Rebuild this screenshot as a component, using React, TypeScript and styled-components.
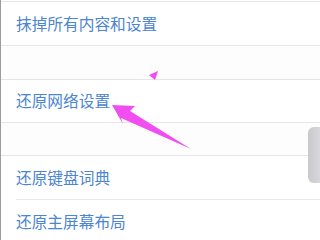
import React from "react";
import styled, { createGlobalStyle } from "styled-components";

const Global = createGlobalStyle`
  html, body { margin: 0; padding: 0; background: #ffffff; }
  body { width: 320px; height: 240px; overflow: hidden; }
`;

const Page = styled.div`
  position: relative;
  width: 320px;
  height: 240px;
  overflow: hidden;
  background: #ffffff;
  border-left: 1px solid #9c9c9c;
  box-sizing: border-box;
  padding-top: 1px;
  font-family: "Noto Sans CJK SC", "Noto Sans", sans-serif;
`;

const Group = styled.div`
  display: flex;
  flex-direction: column;
  background: #ffffff;
  border-top: 1px solid #e6e6ea;
  border-bottom: 1px solid #e6e6ea;
`;

const Gap = styled.div<{ $h: number }>`
  height: ${(p) => p.$h}px;
  background: #fdfdfd;
`;

const Row = styled.div<{ $h: number; $inset?: boolean }>`
  height: ${(p) => p.$h}px;
  display: flex;
  align-items: center;
  padding-left: 15px;
  position: relative;
  ${(p) =>
    p.$inset
      ? `&:not(:last-child)::after { content: ""; position: absolute; left: 15px; right: 0; bottom: 0; height: 1px; background: #e8e8ec; }`
      : ""}
`;

const Label = styled.span`
  font-size: 15.7px;
  line-height: 1;
  color: #4c85d0;
  letter-spacing: 0;
`;

const Handle = styled.div`
  position: absolute;
  right: 0;
  top: 127px;
  width: 12px;
  height: 56px;
  border-radius: 6px 0 0 6px;
  background: linear-gradient(90deg, #c9c9cd, #d8d8dc);
`;

const Overlay = styled.svg`
  position: absolute;
  left: 0;
  top: 0;
  pointer-events: none;
`;

export default function App() {
  return (
    <>
      <Global />
      <Page>
        <Group>
          <Row $h={43}>
            <Label>抹掉所有内容和设置</Label>
          </Row>
        </Group>
        <Gap $h={33} />
        <Group>
          <Row $h={42}>
            <Label>还原网络设置</Label>
          </Row>
        </Group>
        <Gap $h={32} />
        <Group>
          <Row $h={44} $inset>
            <Label>还原键盘词典</Label>
          </Row>
          <Row $h={44} $inset>
            <Label>还原主屏幕布局</Label>
          </Row>
        </Group>
        <Handle />
        <Overlay width="320" height="240" viewBox="0 0 320 240">
          <polygon points="148,75 157,71 154,80" fill="#f04ef0" />
          <polygon points="111,105 134,106 129,111 190,149 120,118 122,124" fill="#f04ef0" />
        </Overlay>
      </Page>
    </>
  );
}
